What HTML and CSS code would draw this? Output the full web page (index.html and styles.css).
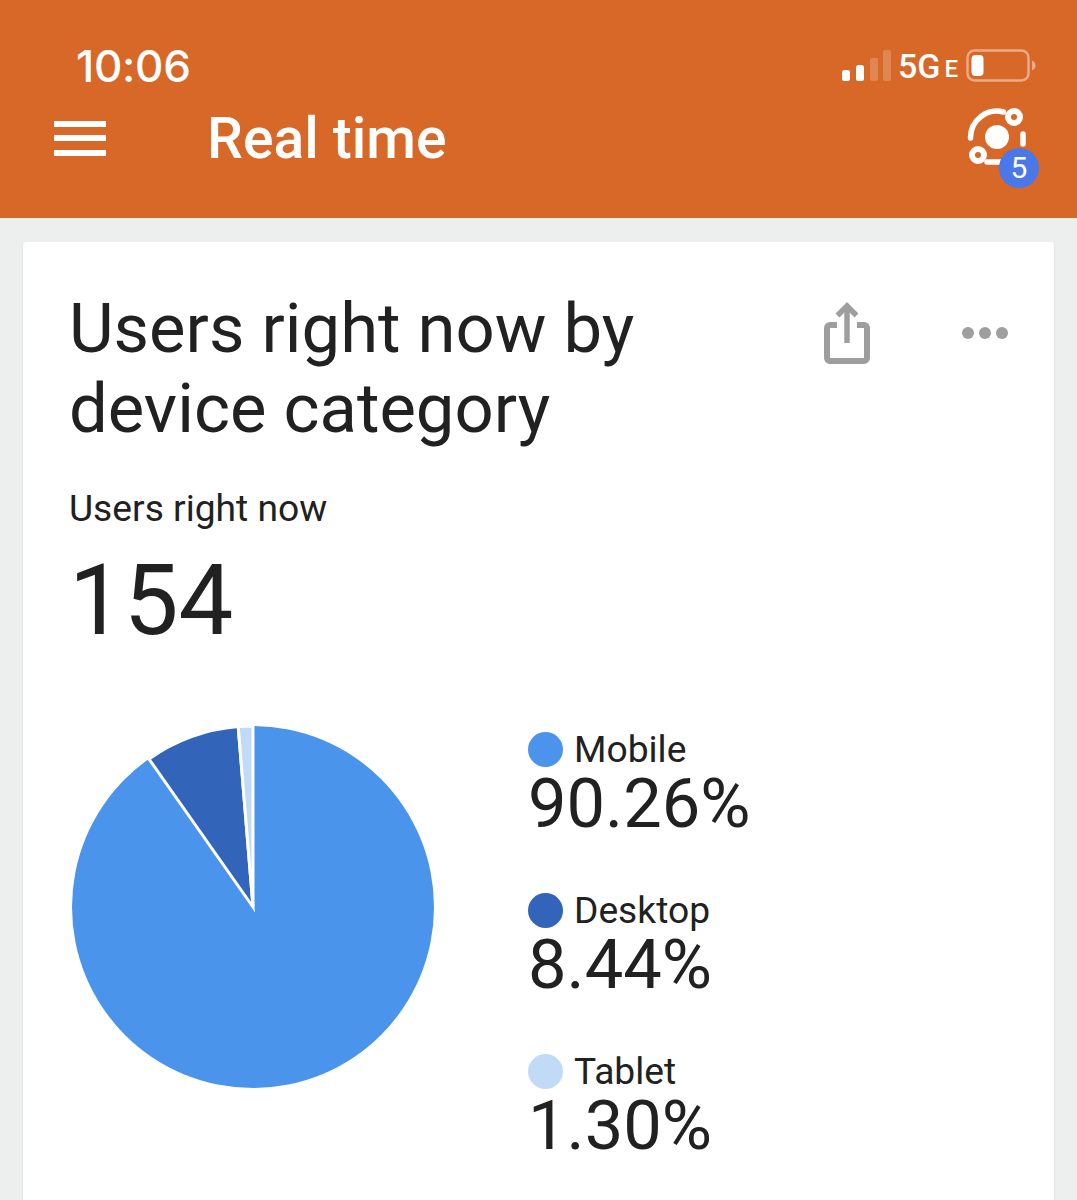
FILE: index.html
```html
<!DOCTYPE html>
<html lang="en">
<head>
  <meta charset="UTF-8">
  <meta name="viewport" content="width=device-width, initial-scale=1.0">
  <title>Real time</title>
  <link rel="stylesheet" href="styles.css">
</head>
<body>
  <header class="header">
    <div class="statusBar">
      <span class="time">10:06</span>
      <div class="statusIcons">
        <svg class="signal" width="49" height="32" viewBox="0 0 49 32">
          <rect x="0" y="20" width="8" height="11" rx="2.5" fill="#fff"/>
          <rect x="14" y="15" width="8" height="16" rx="2.5" fill="#fff"/>
          <rect x="28" y="8" width="8" height="23" rx="2" fill="#fff" opacity="0.2"/>
          <rect x="41" y="0" width="8" height="31" rx="2" fill="#fff" opacity="0.2"/>
        </svg>
        <span class="network">5G</span>
        <span class="networkE">E</span>
        <svg class="battery" width="70" height="34" viewBox="0 0 70 34">
          <rect x="1.5" y="1.5" width="61" height="30" rx="7" fill="none" stroke="#fff" stroke-opacity="0.45" stroke-width="2.5"/>
          <rect x="5.5" y="6" width="12" height="21" rx="4" fill="#fff"/>
          <path d="M66 11.5c2.500 1 3.500 3 3.500 5s-1 4-3.500 5z" fill="#fff" fill-opacity="0.45"/>
        </svg>
      </div>
    </div>
    <div class="toolbar">
      <div class="menuIcon">
        <span></span>
        <span></span>
        <span></span>
      </div>
      <h1>Real time</h1>
      <div class="insights">
        <svg width="62" height="62" viewBox="0 0 62 62">
          <circle cx="30" cy="30" r="12" fill="#fff"/>
          <path d="M3.500 31a26.500 26.500 0 0 1 33-26" fill="none" stroke="#fff" stroke-width="5.500" stroke-linecap="round"/>
          <path d="M56 27v10" fill="none" stroke="#fff" stroke-width="5.500" stroke-linecap="round"/>
          <path d="M20 55h18" fill="none" stroke="#fff" stroke-width="5.500" stroke-linecap="round"/>
          <circle cx="47" cy="10" r="6" fill="none" stroke="#fff" stroke-width="6"/>
          <circle cx="11" cy="48" r="6" fill="none" stroke="#fff" stroke-width="6"/>
        </svg>
        <span class="badge">5</span>
      </div>
    </div>
  </header>
  <main class="content">
    <section class="card">
      <div class="cardHeader">
        <h2>Users right now by device category</h2>
        <div class="cardActions">
          <svg width="46" height="62" viewBox="0 0 46 62">
            <path d="M13 23H6a3 3 0 0 0-3 3v30a3 3 0 0 0 3 3h34a3 3 0 0 0 3-3V26a3 3 0 0 0-3-3h-7" fill="none" stroke="#9e9e9e" stroke-width="6"/>
            <path d="M23 41V5" fill="none" stroke="#9e9e9e" stroke-width="5.500"/>
            <path d="M13.500 13.500L23 4l9.500 9.500" fill="none" stroke="#9e9e9e" stroke-width="5.500"/>
          </svg>
          <div class="moreIcon">
            <span></span>
            <span></span>
            <span></span>
          </div>
        </div>
      </div>
      <p class="metricLabel">Users right now</p>
      <p class="metricValue">154</p>
      <div class="chart">
        <svg class="pie" width="364" height="364" viewBox="0 0 364 364">
          <circle cx="182" cy="182" r="181" fill="#4a94ec"/>
          <path d="M182 182L78 34A181 181 0 0 1 167.200 1.600z" fill="#3264b9" stroke="#fff" stroke-width="3"/>
          <path d="M182 182L167.200 1.600A181 181 0 0 1 182 1z" fill="#c1dbf7" stroke="#fff" stroke-width="3"/>
        </svg>
        <ul class="legend">
          <li class="legendItem">
            <span class="legendName"><i class="dot mobile"></i>Mobile</span>
            <span class="legendValue">90.26%</span>
          </li>
          <li class="legendItem">
            <span class="legendName"><i class="dot desktop"></i>Desktop</span>
            <span class="legendValue">8.44%</span>
          </li>
          <li class="legendItem">
            <span class="legendName"><i class="dot tablet"></i>Tablet</span>
            <span class="legendValue">1.30%</span>
          </li>
        </ul>
      </div>
    </section>
  </main>
</body>
</html>
```
FILE: styles.css
```css
* {
  margin: 0;
  padding: 0;
  box-sizing: border-box;
}
html, body {
  height: 1200px;
  overflow: hidden;
}
body {
  font-family: Roboto, sans-serif;
  color: #212121;
  background-color: #edefef;
}
.header {
  height: 218px;
  padding-top: 43px;
  background-color: #d86828;
  color: #fff;
}
.statusBar {
  display: flex;
  justify-content: space-between;
  align-items: center;
  height: 46px;
  padding: 0 41px 0 76px;
}
.time {
  font-family: Inter, sans-serif;
  font-size: 44px;
  font-weight: 500;
  letter-spacing: -0.3px;
}
.statusIcons {
  display: flex;
  align-items: center;
}
.signal {
  margin-right: 7px;
}
.network {
  font-size: 34px;
  font-weight: 500;
}
.networkE {
  font-size: 24px;
  font-weight: 500;
  margin: 5px 8px 0 4px;
}
.toolbar {
  display: flex;
  align-items: center;
  height: 70px;
  padding: 0 48px 0 54px;
  margin-top: 14px;
}
.menuIcon {
  display: flex;
  flex-direction: column;
  gap: 8.5px;
  width: 52px;
}
.menuIcon span {
  height: 6px;
  background-color: #fff;
}
.toolbar h1 {
  flex: 1;
  margin-left: 101px;
  font-size: 57px;
  font-weight: 500;
}
.insights {
  position: relative;
  width: 62px;
  height: 62px;
}
.badge {
  position: absolute;
  top: 41px;
  left: 32px;
  width: 40px;
  height: 40px;
  border-radius: 50%;
  background-color: #4a78e8;
  font-size: 30px;
  line-height: 40px;
  text-align: center;
}
.content {
  padding: 24px 23px 0;
}
.card {
  height: 1000px;
  padding: 47px 46px 0;
  background-color: #fff;
  border-radius: 4px;
  box-shadow: 0 1px 2px rgba(0, 0, 0, 0.12);
}
.cardHeader {
  display: flex;
  justify-content: space-between;
}
.cardHeader h2 {
  width: 640px;
  font-size: 68.8px;
  line-height: 80px;
  font-weight: 400;
}
.cardActions {
  display: flex;
  align-items: flex-start;
  gap: 92px;
  padding-top: 13px;
}
.moreIcon {
  display: flex;
  gap: 5px;
  margin-top: 25px;
}
.moreIcon span {
  width: 12px;
  height: 12px;
  border-radius: 50%;
  background-color: #9e9e9e;
}
.metricLabel {
  margin-top: 36px;
  font-size: 37.2px;
  line-height: 46px;
}
.metricValue {
  margin-top: 14px;
  font-size: 97.5px;
  line-height: 112px;
  font-weight: 400;
}
.chart {
  display: flex;
  margin-top: 68px;
}
.pie {
  display: block;
  margin-left: 2px;
}
.legend {
  list-style: none;
  margin-left: 93px;
  padding-top: 2px;
}
.legendItem {
  display: flex;
  flex-direction: column;
  margin-bottom: 51px;
}
.legendName {
  display: flex;
  align-items: center;
  gap: 11px;
  font-size: 37.2px;
  line-height: 44px;
}
.legendValue {
  font-size: 68.6px;
  line-height: 66px;
  font-weight: 400;
}
.dot {
  width: 35px;
  height: 35px;
  border-radius: 50%;
}
.dot.mobile {
  background-color: #4a94ec;
}
.dot.desktop {
  background-color: #3264b9;
}
.dot.tablet {
  background-color: #c1dbf7;
}
```
